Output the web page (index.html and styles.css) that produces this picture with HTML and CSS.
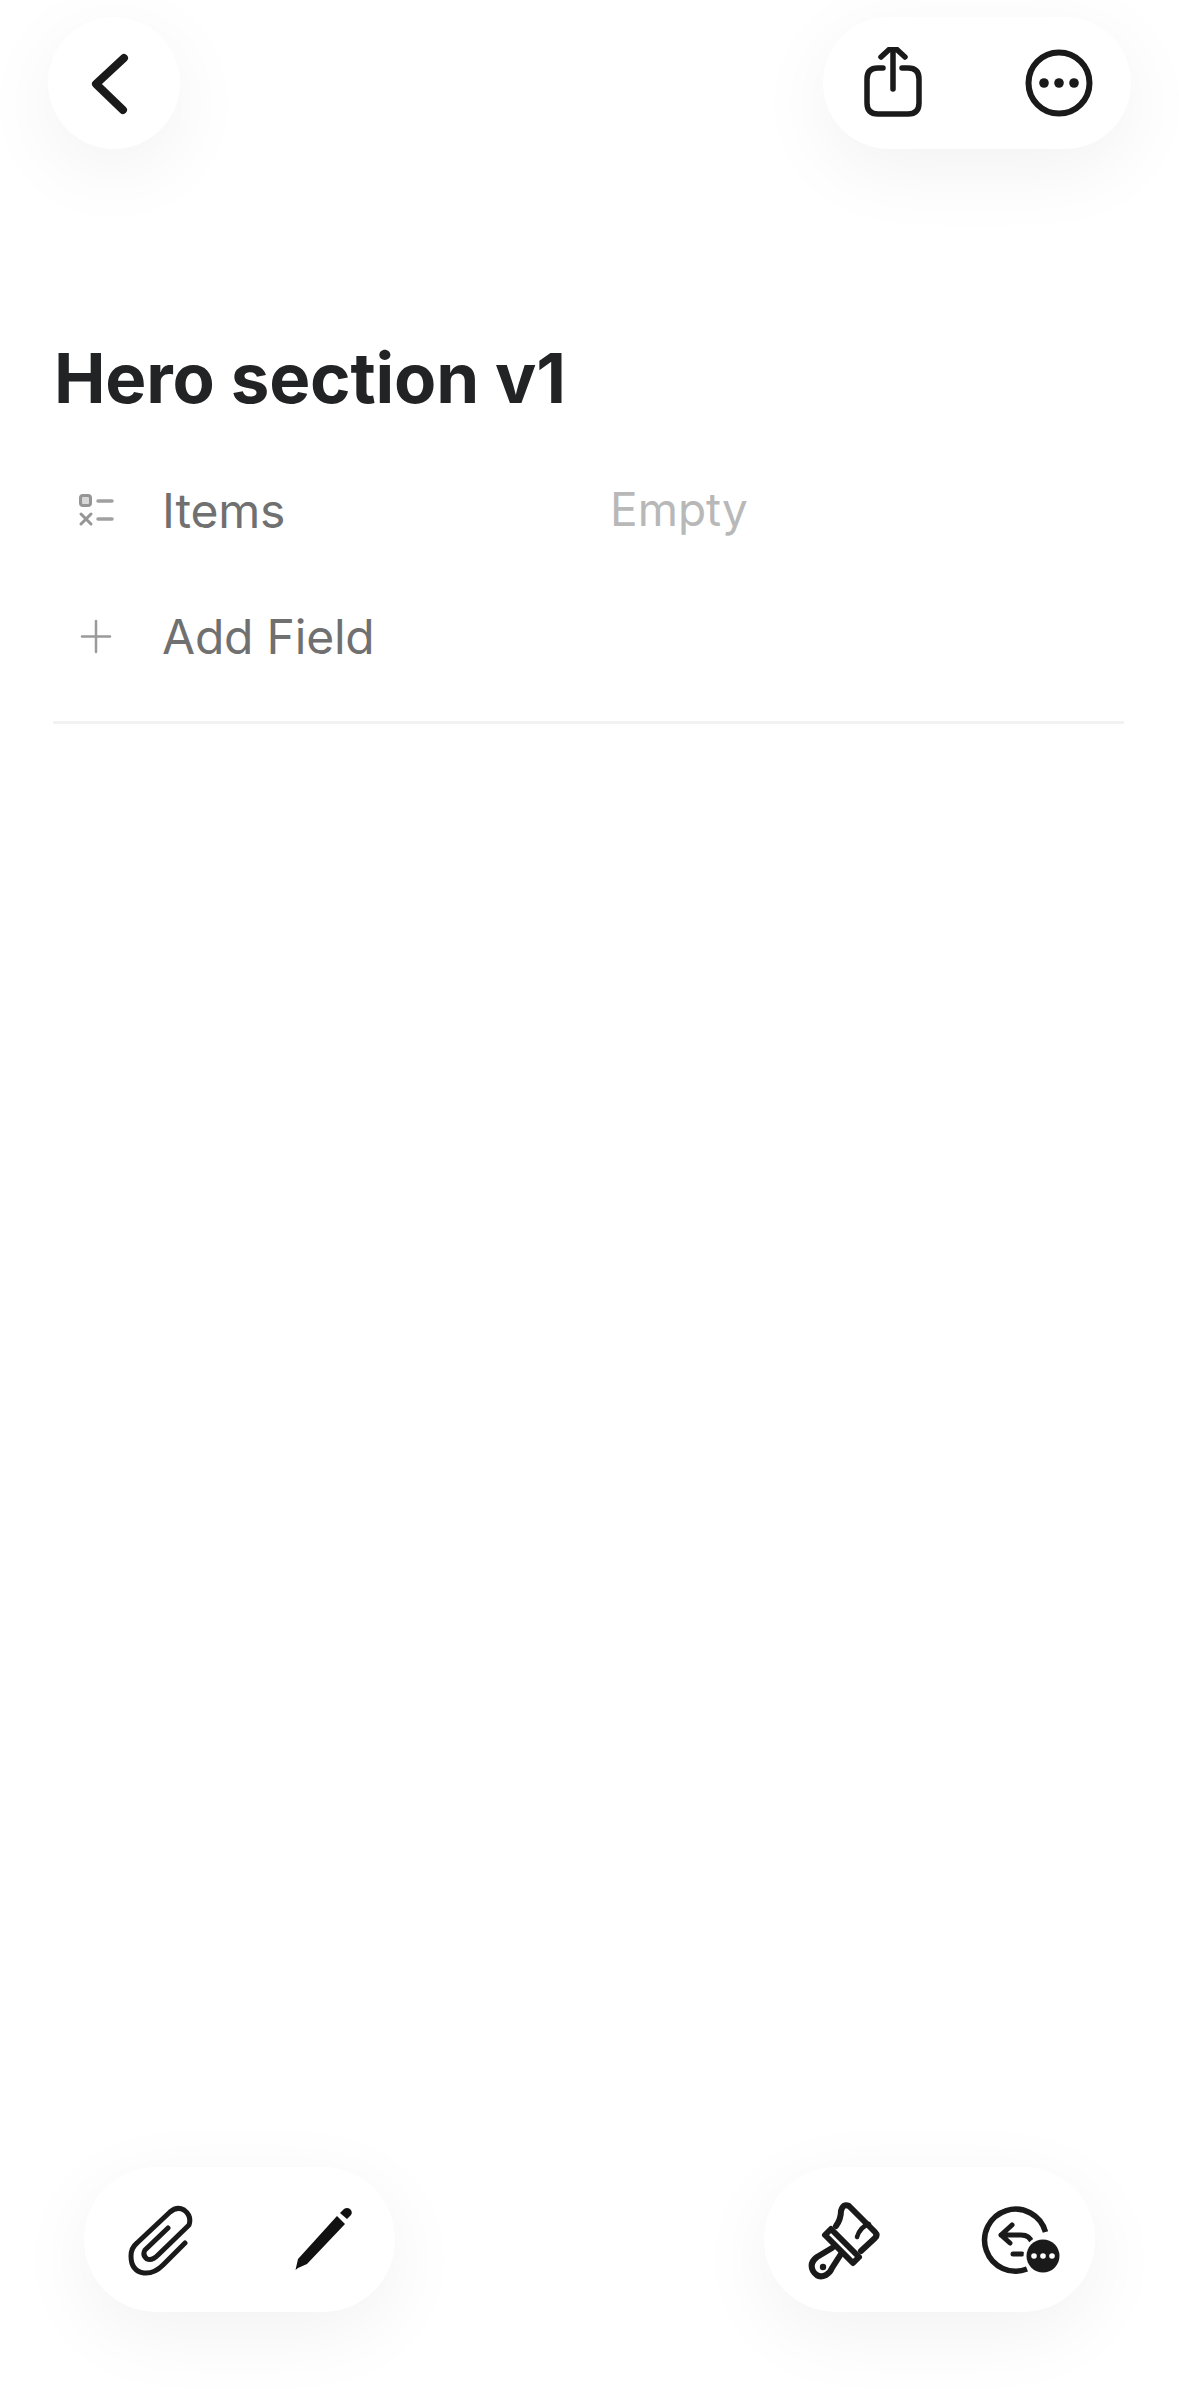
FILE: index.html
```html
<!DOCTYPE html>
<html lang="en">

<head>
    <meta charset="UTF-8">
    <meta name="viewport" content="width=device-width, initial-scale=1.0">
    <title>Hero section v1</title>
    <link rel="stylesheet" href="styles.css">
</head>

<body>
    <div class="top-bar">
        <div class="pill back-pill">
            <svg class="icon" viewBox="78 47 72 72">
                <path d="M124 58 L96 84 L123 110" fill="none" stroke="#1a1a1a" stroke-width="8" stroke-linecap="round" stroke-linejoin="round"/>
            </svg>
        </div>
        <div class="pill actions-pill">
            <svg class="icon" viewBox="77 48 72 72">
                <path d="M103 69 H98 Q87 69 87 80 V104 Q87 115 98 115 H128 Q139 115 139 104 V80 Q139 69 128 69 H122" fill="none" stroke="#1a1a1a" stroke-width="5.500" stroke-linecap="round"/>
                <path d="M113 90 V47 M101 58 L113 47 L125 58" fill="none" stroke="#1a1a1a" stroke-width="5.500" stroke-linecap="round" stroke-linejoin="round"/>
            </svg>
            <svg class="icon" viewBox="243 48 72 72">
                <circle cx="279" cy="84" r="30.500" fill="none" stroke="#1a1a1a" stroke-width="6"/>
                <circle cx="264" cy="84" r="4.800" fill="#1a1a1a"/>
                <circle cx="279" cy="84" r="4.800" fill="#1a1a1a"/>
                <circle cx="294" cy="84" r="4.800" fill="#1a1a1a"/>
            </svg>
        </div>
    </div>

    <div class="content">
        <h1 class="title">Hero section v1</h1>
        <div class="field-row">
            <svg class="field-icon" viewBox="72 490 40 40">
                <rect x="76.5" y="494.5" width="10" height="10" rx="2.5" fill="#d8d8d8" stroke="#959595" stroke-width="3"/>
                <path d="M94 500 H108 M94 518 H108" stroke="#a0a0a0" stroke-width="3.5" stroke-linecap="round"/>
                <path d="M77 513 L87 523 M87 513 L77 523" stroke="#959595" stroke-width="3" stroke-linecap="round"/>
            </svg>
            <span class="field-name">Items</span>
            <span class="field-value">Empty</span>
        </div>
        <div class="field-row add-row">
            <svg class="field-icon" viewBox="72 616 40 40">
                <path d="M78 635.5 H106 M92 620 V651" stroke="#9a9a9a" stroke-width="2.5" stroke-linecap="round"/>
            </svg>
            <span class="field-name">Add Field</span>
        </div>
        <div class="divider"></div>
    </div>

    <div class="bottom-bar">
        <div class="pill tools-pill">
            <svg class="icon" viewBox="75 75 72 72">
                <path d="M135 114 L113 136 Q104 145 94 144 Q81 142 81 127 Q81 119 87 114 L120 83 Q127 77 134 81 Q142 87 139 96 L108 126 Q102 132 97 130 Q92 126 95 121 L118 99" fill="none" stroke="#1a1a1a" stroke-width="5" stroke-linecap="round" stroke-linejoin="round"/>
            </svg>
            <svg class="icon" viewBox="237 75 72 72">
                <path d="M287 87 L295 95 L257 135 L248 139 L245.500 141 L248 130 Z" fill="#111"/>
                <path d="M290 84 L294 80 Q297 78 300 80 Q303 83 301 86 L297 90 Z" fill="#111"/>
            </svg>
        </div>
        <div class="pill style-pill">
            <svg class="icon-lg" viewBox="64 71 80 80">
                <path d="M96 97 Q101 90 101 82 Q103 74 109 77 L135 103 Q138 106 135 109 L121 122" fill="none" stroke="#1a1a1a" stroke-width="6" stroke-linejoin="round" stroke-linecap="round"/>
                <path d="M129 95 Q120 98 117 108" fill="none" stroke="#1a1a1a" stroke-width="4.500" stroke-linecap="round"/>
                <path d="M91 100 L119 128 L113 134 L85 106 Z" fill="none" stroke="#1a1a1a" stroke-width="6" stroke-linejoin="round"/>
                <path d="M92 119 L77 128 Q69 134 73 142 Q78 150 86 146 Q90 144 92 139 L101 125" fill="none" stroke="#1a1a1a" stroke-width="6" stroke-linejoin="round" stroke-linecap="round"/>
                <circle cx="83" cy="138" r="3.200" fill="#1a1a1a"/>
            </svg>
            <svg class="icon-lg" viewBox="241 71 80 80">
                <path d="M305.500 103 A31 31 0 1 0 287 140" fill="none" stroke="#1a1a1a" stroke-width="5.500"/>
                <path d="M272 96 L261 106 L270 114 M261 106 H281 Q290 106 292 114 M273 125 H282" fill="none" stroke="#1a1a1a" stroke-width="5" stroke-linecap="round" stroke-linejoin="round"/>
                <circle cx="303" cy="127" r="19.500" fill="#fff"/>
                <circle cx="303" cy="127" r="16.500" fill="#1a1a1a"/>
                <circle cx="294" cy="127" r="2.800" fill="#fff"/>
                <circle cx="303" cy="127" r="2.800" fill="#fff"/>
                <circle cx="312" cy="127" r="2.800" fill="#fff"/>
            </svg>
        </div>
    </div>
</body>

</html>
```

FILE: styles.css
```css
/* page */
body {
    margin: 0;
    min-height: 100vh;
    display: flex;
    flex-direction: column;
    background-color: #fff;
    font-family: Inter, "Liberation Sans", sans-serif;
}

/* floating white pills */
.pill {
    display: flex;
    align-items: center;
    box-sizing: border-box;
    background-color: #fff;
    border-radius: 72px;
    box-shadow: 0 20px 80px rgba(0, 0, 0, 0.055);
}

.icon {
    display: block;
    width: 72px;
    height: 72px;
}

.icon-lg {
    display: block;
    width: 80px;
    height: 80px;
}

/* top bar */
.top-bar {
    display: flex;
    justify-content: space-between;
    padding: 17px 48px 0;
}

.back-pill {
    width: 132px;
    height: 132px;
    padding-left: 30px;
}

.actions-pill {
    height: 132px;
    width: 308px;
    padding-left: 34px;
    gap: 94px;
}

/* title and fields */
.content {
    flex: 1;
    padding: 0 55px 0 53px;
}

.title {
    margin: 187px 0 0 1px;
    font-size: 69px;
    line-height: 84px;
    font-weight: 700;
    letter-spacing: -0.2px;
    color: #212325;
}

.field-row {
    display: flex;
    align-items: center;
    height: 60px;
    margin-top: 61px;
}

.add-row {
    margin-top: 66px;
}

.field-icon {
    display: block;
    width: 40px;
    height: 40px;
    margin: 0 46px 0 23px;
    flex-shrink: 0;
}

.field-name {
    width: 448px;
    font-size: 48px;
    line-height: 60px;
    letter-spacing: -0.2px;
    color: #707070;
}

.field-value {
    margin-bottom: 5px;
    font-size: 46px;
    line-height: 60px;
    color: #b8b8b8;
}

.divider {
    height: 3px;
    margin-top: 54px;
    background-color: #f2f2f2;
}

/* bottom bar */
.bottom-bar {
    display: flex;
    justify-content: space-between;
    padding: 0 84px 84px;
}

.tools-pill {
    width: 311px;
    height: 145px;
    padding-left: 41px;
    gap: 90px;
}

.style-pill {
    width: 331px;
    height: 145px;
    padding-left: 40px;
    gap: 97px;
}
```
